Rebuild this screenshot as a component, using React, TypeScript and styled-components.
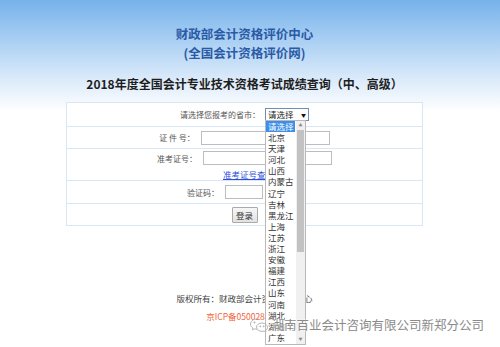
import React from 'react';
import styled, { createGlobalStyle } from 'styled-components';

const GlobalStyle = createGlobalStyle`
  html, body {
    margin: 0;
    padding: 0;
    background: #fff;
  }
  body {
    font-family: "Noto Sans CJK SC", "Noto Sans", sans-serif;
  }
`;

const provinces = [
  '请选择', '北京', '天津', '河北', '山西', '内蒙古', '辽宁', '吉林', '黑龙江', '上海',
  '江苏', '浙江', '安徽', '福建', '江西', '山东', '河南', '湖北', '湖南', '广东',
];

// Layout
const Page = styled.div`
  position: relative;
  width: 500px;
  height: 347px;
  overflow: hidden;
  padding-right: 11px;
  box-sizing: border-box;
  background: linear-gradient(180deg, #76b2ea 0px, #a9cff3 40px, #dcebfa 80px, #ffffff 112px);
`;

const Header = styled.div`
  padding-top: 24px;
  text-align: center;
`;

const SiteTitle = styled.div`
  font-size: 12.5px;
  font-weight: 700;
  line-height: 19px;
  color: #2a5aa5;
`;

const Heading = styled.h1`
  margin: 14px 0 0;
  font-size: 12px;
  font-weight: 700;
  line-height: 16px;
  color: #1e1e1e;
  text-align: center;
`;

const FormTable = styled.div`
  width: 357px;
  margin: 10px auto 0;
  border: 1px solid #d8e7f6;
  background: #fff;
  box-sizing: border-box;
`;

const Row = styled.div<{ h: number; tall?: boolean }>`
  height: ${p => p.h}px;
  display: flex;
  flex-direction: column;
  align-items: center;
  justify-content: ${p => (p.tall ? 'flex-start' : 'center')};
  padding-top: ${p => (p.tall ? 2 : 0)}px;
  box-sizing: border-box;
  & + & {
    border-top: 1px solid #d8e7f6;
  }
`;

const Line = styled.div`
  display: flex;
  align-items: center;
  gap: 6px;
`;

const Label = styled.span`
  font-size: 8px;
  color: #555;
  white-space: pre;
`;

const TextInput = styled.div<{ w: number }>`
  width: ${p => p.w}px;
  height: 12px;
  border: 1px solid #bdbdbd;
  background: #fff;
`;

const Captcha = styled.div`
  width: 36px;
  height: 13px;
  background: #d9d9d9;
  margin-left: -3px;
`;

const QueryLink = styled.a`
  margin-top: 3px;
  margin-left: 8px;
  font-size: 8.5px;
  color: #2d4fd8;
  text-decoration: underline;
`;

const Button = styled.div`
  width: 24px;
  height: 14px;
  border: 1px solid #aaa;
  border-radius: 1px;
  background: linear-gradient(#f6f6f6, #e2e2e2);
  font-size: 8.5px;
  line-height: 14px;
  text-align: center;
  color: #333;
`;

// Select with open list
const SelectWrap = styled.div`
  position: relative;
  margin-left: -1px;
`;

const SelectBox = styled.div`
  width: 38px;
  height: 11px;
  border: 1px solid #6e8fb8;
  background: #fff;
  display: flex;
  align-items: center;
  justify-content: space-between;
  padding: 0 2px;
  box-sizing: content-box;
  font-size: 8.5px;
  line-height: 11px;
  color: #222;
`;

const Caret = styled.span`
  font-size: 5px;
  color: #111;
`;

const DropList = styled.div`
  position: absolute;
  top: 12px;
  left: 0;
  width: 39px;
  height: 223px;
  border: 1px solid #b9b9b9;
  background: #fff;
  display: flex;
  z-index: 5;
`;

const Options = styled.div`
  flex: 1;
  display: flex;
  flex-direction: column;
`;

const Option = styled.div<{ active?: boolean }>`
  height: 11.1px;
  line-height: 11px;
  padding-left: 2px;
  font-size: 8.5px;
  color: ${p => (p.active ? '#fff' : '#333')};
  background: ${p => (p.active ? '#3d8ee8' : 'transparent')};
  margin-right: ${p => (p.active ? 1 : 0)}px;
  white-space: nowrap;
`;

const ScrollTrack = styled.div`
  width: 9px;
  background: #f0f0f0;
  display: flex;
  flex-direction: column;
  align-items: center;
`;

const ScrollArrow = styled.div`
  height: 9px;
  font-size: 4px;
  line-height: 9px;
  color: #888;
`;

const ScrollThumb = styled.div`
  width: 7px;
  height: 122px;
  background: #c2c2c2;
`;

const ScrollGap = styled.div`
  flex: 1;
`;

// Footer
const Footer = styled.div`
  margin-top: 63px;
  text-align: center;
  font-size: 8.5px;
  line-height: 18px;
`;

const Copyright = styled.div`
  color: #444;
`;

const Icp = styled.div`
  color: #f0643c;
`;

const Watermark = styled.div`
  position: absolute;
  right: 16px;
  bottom: 13px;
  display: flex;
  align-items: center;
  gap: 2px;
  font-size: 12.5px;
  color: #8a8a8a;
  text-shadow: 0 0 2px #fff, 0 0 2px #fff;
  z-index: 10;
  white-space: nowrap;
`;

const WeChatIcon = () => (
  <svg width="20" height="16" viewBox="0 0 20 16" fill="none" stroke="#b5b5b5" strokeWidth="1">
    <path d="M8 2c-3.6 0-6.5 2.3-6.5 5.1 0 1.6 0.9 3 2.4 3.9l-0.6 1.9 2.2-1.1c0.8 0.2 1.6 0.4 2.5 0.4" />
    <path d="M13 6c3 0 5.5 1.9 5.5 4.3 0 1.3-0.7 2.5-1.9 3.2l0.4 1.5-1.8-0.9c-0.7 0.2-1.4 0.3-2.2 0.3-3 0-5.5-1.9-5.5-4.3S10 6 13 6z" />
    <circle cx="5.5" cy="5.5" r="0.6" fill="#b5b5b5" />
    <circle cx="11.3" cy="9.3" r="0.5" fill="#b5b5b5" />
    <circle cx="14.7" cy="9.3" r="0.5" fill="#b5b5b5" />
  </svg>
);

export default function App() {
  return (
    <Page>
      <GlobalStyle />
      <Header>
        <SiteTitle>财政部会计资格评价中心</SiteTitle>
        <SiteTitle>(全国会计资格评价网)</SiteTitle>
      </Header>
      <Heading>2018年度全国会计专业技术资格考试成绩查询（中、高级）</Heading>

      <FormTable>
        <Row h={23}>
          <Line>
            <Label>请选择您报考的省市：</Label>
            <SelectWrap>
              <SelectBox>
                <span>请选择</span>
                <Caret>▼</Caret>
              </SelectBox>
              <DropList>
                <Options>
                  {provinces.map((p, i) => (
                    <Option key={p} active={i === 0}>{p}</Option>
                  ))}
                </Options>
                <ScrollTrack>
                  <ScrollArrow>▲</ScrollArrow>
                  <ScrollThumb />
                  <ScrollGap />
                  <ScrollArrow>▼</ScrollArrow>
                </ScrollTrack>
              </DropList>
            </SelectWrap>
          </Line>
        </Row>
        <Row h={22}>
          <Line>
            <Label>证 件 号：</Label>
            <TextInput w={127} />
          </Line>
        </Row>
        <Row h={32} tall>
          <Line>
            <Label>准考证号：</Label>
            <TextInput w={127} />
          </Line>
          <QueryLink>准考证号查询</QueryLink>
        </Row>
        <Row h={23}>
          <Line>
            <Label>验证码：</Label>
            <TextInput w={36} />
            <Captcha />
          </Line>
        </Row>
        <Row h={22}>
          <Button>登录</Button>
        </Row>
      </FormTable>

      <Footer>
        <Copyright>版权所有：财政部会计资格评价中心</Copyright>
        <Icp>京ICP备05002889号</Icp>
      </Footer>

      <Watermark>
        <WeChatIcon />
        <span>湖南百业会计咨询有限公司新郑分公司</span>
      </Watermark>
    </Page>
  );
}
